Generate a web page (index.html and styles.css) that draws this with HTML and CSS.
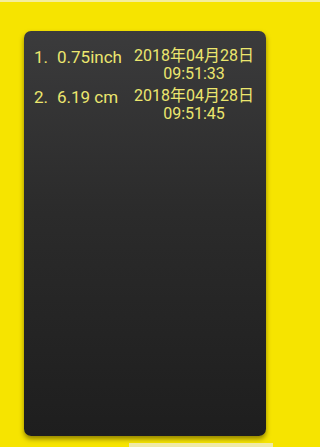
FILE: index.html
```html
<!DOCTYPE html>
<html>
<head>
<meta charset="utf-8">
<link rel="stylesheet" href="styles.css">
</head>
<body>
<div class="screen">
  <div class="card">
    <div class="row">
      <div class="value"><span class="idx">1.</span><span>0.75inch</span></div>
      <div class="stamp"><div class="line">2018年04月28日</div><div class="line">09:51:33</div></div>
    </div>
    <div class="row">
      <div class="value"><span class="idx">2.</span><span>6.19 cm</span></div>
      <div class="stamp"><div class="line">2018年04月28日</div><div class="line">09:51:45</div></div>
    </div>
  </div>
  <div class="strip"></div>
</div>
</body>
</html>
```
FILE: styles.css
```css
html, body {
  margin: 0;
  padding: 0;
  overflow: hidden;
}
html {
  background: #f6e400;
  border-top: 2px solid #f4ee9c;
}
body {
  height: 445px;
  font-family: Roboto, "Noto Sans CJK SC", sans-serif;
}
.screen {
  width: 290px;
  display: flex;
  flex-direction: column;
  padding: 29px 24px 0 24px;
  box-sizing: border-box;
}
.card {
  height: 405px;
  border-radius: 7px;
  background: linear-gradient(#3b3b3c, #2b2b2b 45%, #1e1e1e);
  box-shadow: 0 3px 5px rgba(60, 50, 0, 0.55);
  padding: 16px 4px 0 10px;
  box-sizing: border-box;
  display: flex;
  flex-direction: column;
  gap: 4px;
  color: #ece66e;
}
.row {
  display: flex;
  align-items: flex-start;
}
.value {
  width: 92px;
  font-size: 17px;
  line-height: 18px;
  display: flex;
  gap: 9px;
  padding-top: 1px;
}
.idx {
  width: 14px;
}
.stamp {
  flex: 1;
  text-align: center;
  font-size: 16px;
  display: flex;
  flex-direction: column;
}
.line {
  height: 18px;
  line-height: 18px;
}
.strip {
  margin: 7px -7px 0 105px;
  height: 6px;
  background: #efe9a6;
}
```
